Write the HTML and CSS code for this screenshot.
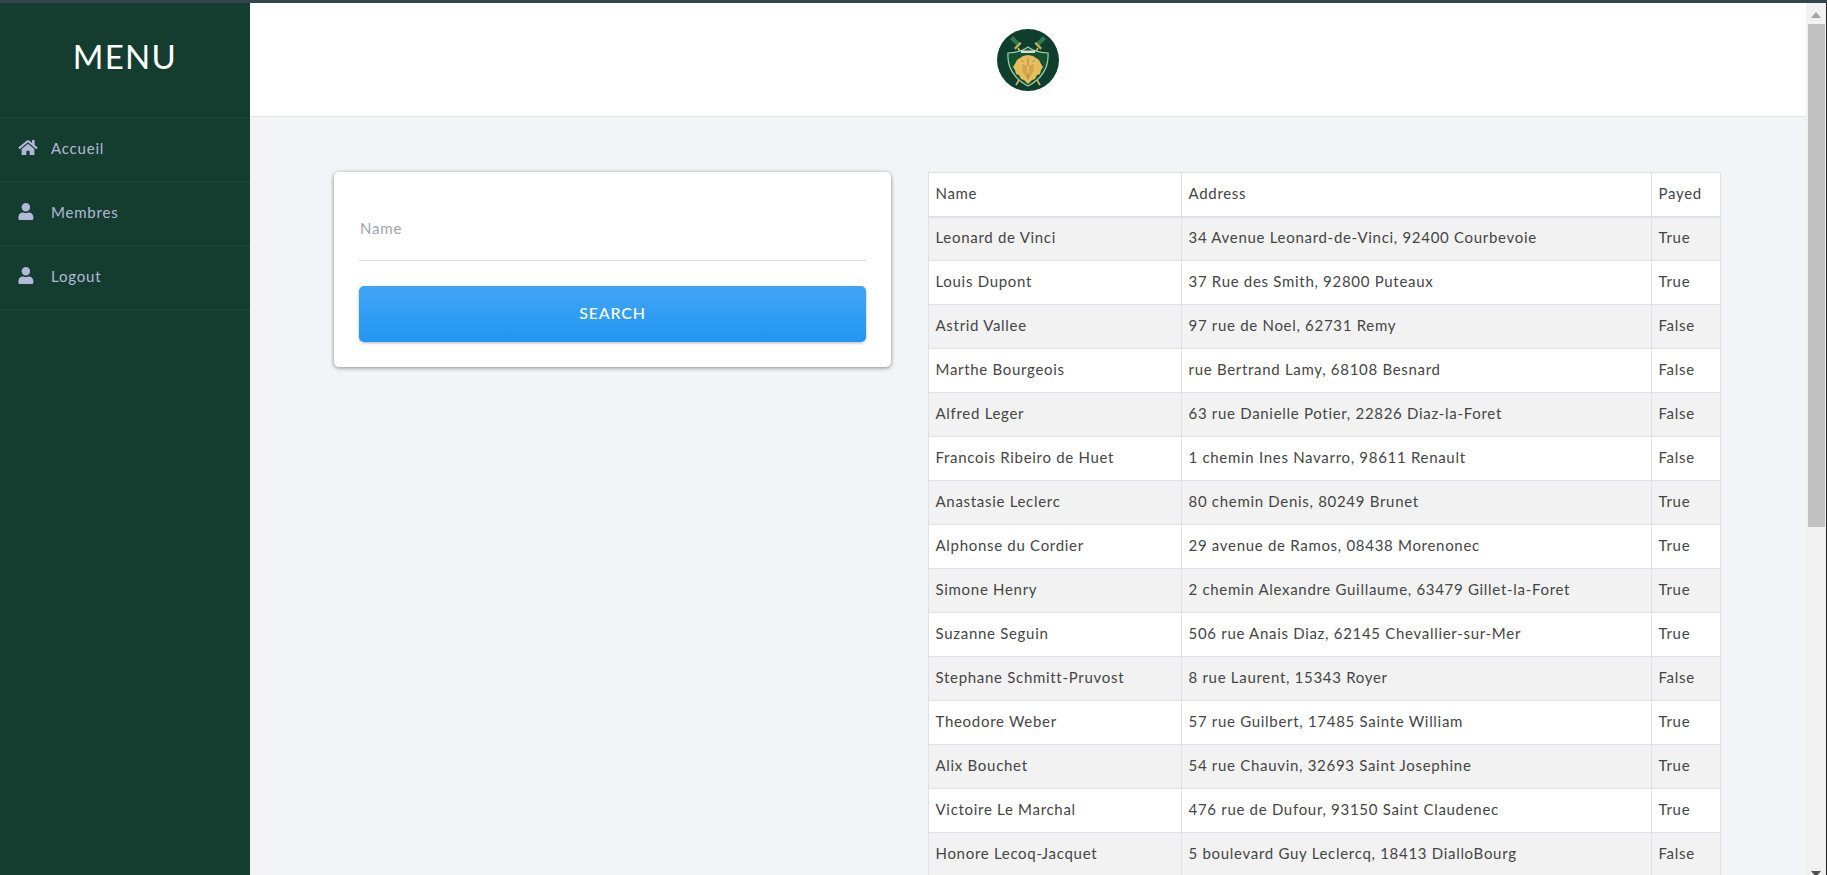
FILE: index.html

```html
<!DOCTYPE html>
<html lang="fr">
<head>
  <meta charset="UTF-8" />
  <title>Membres</title>
  <link rel="stylesheet" href="styles.css">
</head>
<body>

  <div class="topline"></div>

  <div class="wrapper">
    <div class="sidebar">
      <div class="sidebar-title">MENU</div>
      <a class="nav-link" href="#">
        <svg class="nav-icon" viewBox="0 0 576 512"><path d="M280.37 148.26L96 300.11V464a16 16 0 0 0 16 16l112.06-.29a16 16 0 0 0 15.92-16V368a16 16 0 0 1 16-16h64a16 16 0 0 1 16 16v95.64a16 16 0 0 0 16 16.05L464 480a16 16 0 0 0 16-16V300L295.67 148.26a12.19 12.19 0 0 0-15.3 0zM571.6 251.47L488 182.56V44.05a12 12 0 0 0-12-12h-56a12 12 0 0 0-12 12v72.61L318.47 43a48 48 0 0 0-61 0L4.34 251.47a12 12 0 0 0-1.6 16.9l25.5 31A12 12 0 0 0 45.15 301l235.22-193.74a12.19 12.19 0 0 1 15.3 0L530.9 301a12 12 0 0 0 16.9-1.6l25.5-31a12 12 0 0 0-1.7-16.93z"/></svg>
        Accueil
      </a>
      <a class="nav-link" href="#">
        <svg class="nav-icon" viewBox="0 0 576 512"><path d="M224 256c70.7 0 128-57.3 128-128S294.7 0 224 0 96 57.3 96 128s57.3 128 128 128zm89.6 32h-16.7c-22.2 10.2-46.9 16-72.9 16s-50.6-5.8-72.9-16h-16.7C60.2 288 0 348.2 0 422.4V464c0 26.5 21.5 48 48 48h352c26.5 0 48-21.5 48-48v-41.6c0-74.2-60.2-134.4-134.4-134.4z"/></svg>
        Membres
      </a>
      <a class="nav-link" href="#">
        <svg class="nav-icon" viewBox="0 0 576 512"><path d="M224 256c70.7 0 128-57.3 128-128S294.7 0 224 0 96 57.3 96 128s57.3 128 128 128zm89.6 32h-16.7c-22.2 10.2-46.9 16-72.9 16s-50.6-5.8-72.9-16h-16.7C60.2 288 0 348.2 0 422.4V464c0 26.5 21.5 48 48 48h352c26.5 0 48-21.5 48-48v-41.6c0-74.2-60.2-134.4-134.4-134.4z"/></svg>
        Logout
      </a>
    </div>

    <div class="main">
      <div class="header">
        <svg class="logo" viewBox="0 0 62 62">
          <circle cx="31" cy="31" r="31" fill="#0f3f2c"/>
          <!-- crossed swords behind the shield -->
          <path d="M21 19L43 56" stroke="#e0bb62" stroke-width="1.500"/>
          <path d="M41 19L19 56" stroke="#e0bb62" stroke-width="1.500"/>
          <path d="M13 10l3-3 8 8-3 3z M49 10l-3-3-8 8 3 3z" fill="#2f7a50"/>
          <path d="M17 19l6-6 1.500 1.500-6 6z M45 19l-6-6-1.500 1.500 6 6z" fill="#c9b45c"/>
          <!-- shield -->
          <path d="M11 24c8-.5 15-2 20-6 5 4 12 5.500 20 6 1 14-6 26-20 33-14-7-21-19-20-33z" fill="#14512f" stroke="#a5cdb0" stroke-width="1.200"/>
          <path d="M24 21.500h14v2.500H24z" fill="#d5e4d8"/>
          <!-- lion -->
          <path d="M31 26l5 1 3 2 3 2 2 4 2 3-2 3-1 4-3 1-2 4-3 1-4 4-4-4-3-1-2-4-3-1-1-4-2-3 2-3 2-4 3-2 3-2z" fill="#e8bd5c"/>
          <path d="M25 35l5 2v6l1 2 1-2v-6l5-2-1 8-3 5-2 2-2-2-3-5z" fill="#cfa54c"/>
          <path d="M31 29v8M27 33l-3-2M35 33l3-2M31 46v5" stroke="#8b7a3a" stroke-width=".7" fill="none"/>
        </svg>
      </div>

      <div class="content">
        <div class="search-card">
          <input class="search-input" type="text" placeholder="Name">
          <button class="search-btn">SEARCH</button>
        </div>

        <table class="members">
          <colgroup>
            <col class="col-name">
            <col class="col-address">
            <col class="col-payed">
          </colgroup>
          <thead>
            <tr><th>Name</th><th>Address</th><th>Payed</th></tr>
          </thead>
          <tbody>
            <tr><td>Leonard de Vinci</td><td>34 Avenue Leonard-de-Vinci, 92400 Courbevoie</td><td>True</td></tr>
            <tr><td>Louis Dupont</td><td>37 Rue des Smith, 92800 Puteaux</td><td>True</td></tr>
            <tr><td>Astrid Vallee</td><td>97 rue de Noel, 62731 Remy</td><td>False</td></tr>
            <tr><td>Marthe Bourgeois</td><td>rue Bertrand Lamy, 68108 Besnard</td><td>False</td></tr>
            <tr><td>Alfred Leger</td><td>63 rue Danielle Potier, 22826 Diaz-la-Foret</td><td>False</td></tr>
            <tr><td>Francois Ribeiro de Huet</td><td>1 chemin Ines Navarro, 98611 Renault</td><td>False</td></tr>
            <tr><td>Anastasie Leclerc</td><td>80 chemin Denis, 80249 Brunet</td><td>True</td></tr>
            <tr><td>Alphonse du Cordier</td><td>29 avenue de Ramos, 08438 Morenonec</td><td>True</td></tr>
            <tr><td>Simone Henry</td><td>2 chemin Alexandre Guillaume, 63479 Gillet-la-Foret</td><td>True</td></tr>
            <tr><td>Suzanne Seguin</td><td>506 rue Anais Diaz, 62145 Chevallier-sur-Mer</td><td>True</td></tr>
            <tr><td>Stephane Schmitt-Pruvost</td><td>8 rue Laurent, 15343 Royer</td><td>False</td></tr>
            <tr><td>Theodore Weber</td><td>57 rue Guilbert, 17485 Sainte William</td><td>True</td></tr>
            <tr><td>Alix Bouchet</td><td>54 rue Chauvin, 32693 Saint Josephine</td><td>True</td></tr>
            <tr><td>Victoire Le Marchal</td><td>476 rue de Dufour, 93150 Saint Claudenec</td><td>True</td></tr>
            <tr><td>Honore Lecoq-Jacquet</td><td>5 boulevard Guy Leclercq, 18413 DialloBourg</td><td>False</td></tr>
          </tbody>
        </table>
      </div>
    </div>

    <div class="scrollbar">
      <div class="arrow-up"></div>
      <div class="thumb"></div>
      <div class="track"></div>
      <div class="arrow-down"></div>
    </div>
  </div>

</body>
</html>
```

FILE: styles.css

```css
* {
  box-sizing: border-box;
}

html, body {
  height: 100%;
}

body {
  margin: 0;
  overflow: hidden;
  display: flex;
  flex-direction: column;
  font-family: 'Lato', sans-serif;
  font-size: 15px;
  letter-spacing: 0.8px;
  color: #454545;
  background: #f3f4f8;
}

.topline {
  height: 3px;
  background: #33444c;
  flex-shrink: 0;
}

.wrapper {
  flex: 1;
  display: flex;
  min-height: 0;
}

/* sidebar */
.sidebar {
  width: 250px;
  flex-shrink: 0;
  background: #143d30;
}

.sidebar-title {
  height: 115px;
  padding-top: 33px;
  text-align: center;
  font-size: 33px;
  line-height: 40px;
  letter-spacing: 1.3px;
  color: #fff;
  border-bottom: 1px solid #1c4638;
}

.nav-link {
  height: 64px;
  display: flex;
  align-items: center;
  gap: 13px;
  padding: 0 0 4px 18px;
  color: #b4b8d8;
  text-decoration: none;
  border-bottom: 1px solid #1c4638;
}

.nav-icon {
  width: 20px;
  height: 17px;
  fill: #b4b8d8;
}

/* main */
.main {
  flex: 1;
  min-width: 0;
  display: flex;
  flex-direction: column;
}

.header {
  height: 114px;
  flex-shrink: 0;
  display: flex;
  align-items: center;
  justify-content: center;
  background: #fff;
  border-bottom: 1px solid #e0e2e8;
}

.logo {
  width: 62px;
  height: 62px;
  filter: blur(0.4px);
}

.content {
  flex: 1;
  min-height: 0;
  overflow: hidden;
  display: flex;
  align-items: flex-start;
  gap: 37px;
  padding: 55px 0 0 84px;
}

/* search */
.search-card {
  width: 557px;
  flex-shrink: 0;
  padding: 25px;
  background: #fff;
  border-radius: 5px;
  box-shadow: 0 1px 4px rgba(0, 0, 0, 0.45);
}

.search-input {
  display: block;
  width: 100%;
  height: 64px;
  padding: 0 1px 2px;
  border: none;
  border-bottom: 1px solid #dcdde2;
  outline: none;
  font-family: inherit;
  font-size: 15px;
  letter-spacing: 0.8px;
  background: transparent;
}

.search-input::placeholder {
  color: #a3a3ab;
}

.search-btn {
  display: block;
  width: 100%;
  height: 56px;
  margin-top: 25px;
  padding-bottom: 5px;
  border: none;
  border-radius: 5px;
  background: linear-gradient(#42a5f5, #2196f3);
  box-shadow: 0 1px 3px rgba(0, 0, 0, 0.3);
  color: #fff;
  font-family: inherit;
  font-size: 16px;
  font-weight: 500;
  letter-spacing: 0.8px;
  cursor: pointer;
}

/* table */
.members {
  width: 793px;
  flex-shrink: 0;
  table-layout: fixed;
  border-collapse: collapse;
  background: #fff;
  letter-spacing: 0.7px;
}

.col-name {
  width: 253px;
}

.col-address {
  width: 470px;
}

.members th,
.members td {
  height: 44px;
  padding: 0 6.5px 3px;
  border: 1px solid #dee2e6;
  font-weight: 400;
  text-align: left;
  white-space: nowrap;
}

.members th {
  border-bottom-width: 2px;
}

.members tbody tr:nth-child(odd) {
  background: #f2f2f2;
}

/* scrollbar */
.scrollbar {
  width: 21px;
  flex-shrink: 0;
  display: flex;
  flex-direction: column;
  align-items: flex-start;
  background: #f1f1f1;
  border-right: 1px solid #222;
}

.arrow-up,
.arrow-down {
  width: 0;
  height: 0;
  flex-shrink: 0;
  margin-left: 5px;
  border-left: 5px solid transparent;
  border-right: 5px solid transparent;
}

.arrow-up {
  margin-top: 9px;
  margin-bottom: 6px;
  border-bottom: 6px solid #a3a3a3;
}

.arrow-down {
  margin-bottom: -2px;
  border-top: 6px solid #505050;
}

.thumb {
  width: 17px;
  height: 503px;
  flex-shrink: 0;
  margin-left: 2px;
  background: #c1c1c1;
}

.track {
  flex: 1;
}
```
